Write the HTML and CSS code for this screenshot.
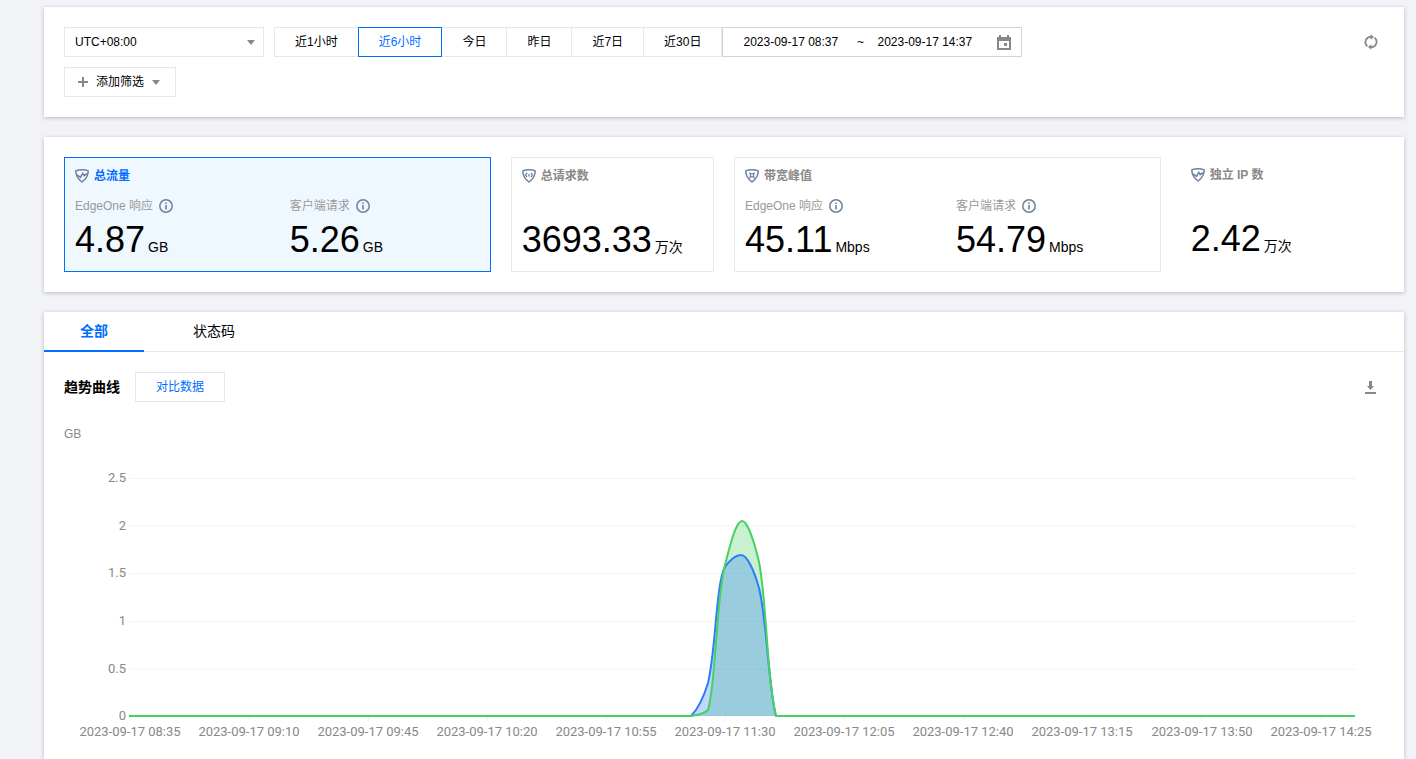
FILE: index.html
```html
<!DOCTYPE html>
<html lang="zh-CN">
<head>
  <meta charset="UTF-8">
  <meta name="viewport" content="width=device-width, initial-scale=1.0">
  <title>流量分析</title>
  <link rel="stylesheet" href="styles.css">
</head>
<body>
<svg class="sprite" aria-hidden="true">
  <symbol id="shield" viewBox="0 0 14 14">
    <path d="M7 .8C5 .8 2.6 1.1.8 1.9C.8 6.4 2.4 9.6 7 13C11.6 9.6 13.2 6.4 13.2 1.9C11.4 1.1 9 .8 7 .8Z" fill="none" stroke="currentColor" stroke-width="1.5"/>
  </symbol>
  <symbol id="pulse" viewBox="0 0 14 14">
    <path d="M2 5.8L5.4 8.4L7.8 4.4L9.2 6.6L12 4.6" fill="none" stroke="currentColor" stroke-width="1.5"/>
  </symbol>
  <symbol id="info" viewBox="0 0 14 14">
    <circle cx="7" cy="7" r="6.2" fill="none" stroke="currentColor" stroke-width="1.5"/>
    <path d="M6.2 3.4H7.8V5H6.2ZM6.2 6H7.8V10.6H6.2Z" fill="currentColor"/>
  </symbol>
</svg>

<main class="page">
  <section class="card filters">
    <div class="filter-row">
      <div class="select-box">
        <select class="select" aria-label="时区">
          <option>UTC+08:00</option>
        </select>
      </div>
      <div class="range">
        <div class="segment">
          <button type="button" class="btn">近1小时</button>
          <button type="button" class="btn active">近6小时</button>
          <button type="button" class="btn">今日</button>
          <button type="button" class="btn">昨日</button>
          <button type="button" class="btn">近7日</button>
          <button type="button" class="btn">近30日</button>
        </div>
        <div class="date-range">
          <input class="date-input" type="text" aria-label="开始时间" value="2023-09-17 08:37">
          <span class="tilde">~</span>
          <input class="date-input" type="text" aria-label="结束时间" value="2023-09-17 14:37">
          <svg class="calendar" width="14" height="16" viewBox="0 0 14 16">
            <path d="M2 1H4V3H10V1H12V3H14V16H0V3H2ZM2 7V14H12V7ZM7 9H10V12H7Z" fill="#888" fill-rule="evenodd"/>
          </svg>
        </div>
      </div>
      <button type="button" class="icon-btn refresh" aria-label="刷新">
        <svg width="14" height="16" viewBox="0 0 14 16">
          <path d="M3.4 12.2A5.2 5.2 0 0 1 7.4 3M10.6 3.8A5.2 5.2 0 0 1 6.6 13" fill="none" stroke="#888" stroke-width="1.8"/>
          <path d="M6.6 .2L10 3L6.6 5.8ZM7.4 10.2L4 13L7.4 15.8Z" fill="#888"/>
        </svg>
      </button>
    </div>
    <button type="button" class="btn add-filter">
      <svg width="10" height="10" viewBox="0 0 10 10"><path d="M5 0V10M0 5H10" stroke="#888" stroke-width="2"/></svg>
      添加筛选
      <span class="caret"></span>
    </button>
  </section>

  <section class="card stats">
    <div class="stat wide selected">
      <h3 class="stat-title"><svg class="icon"><use href="#shield"/><use href="#pulse"/></svg>总流量</h3>
      <div class="metrics">
        <div class="metric">
          <div class="metric-label">EdgeOne 响应<svg class="icon"><use href="#info"/></svg></div>
          <div class="metric-value">4.87<span class="unit">GB</span></div>
        </div>
        <div class="metric">
          <div class="metric-label">客户端请求<svg class="icon"><use href="#info"/></svg></div>
          <div class="metric-value">5.26<span class="unit">GB</span></div>
        </div>
      </div>
    </div>
    <div class="stat">
      <h3 class="stat-title">
        <svg class="icon"><use href="#shield"/><path d="M5 3.8L3.6 6L5 8.2M9 3.8L10.4 6L9 8.2M7 5V7.5" fill="none" stroke="currentColor" stroke-width="1.3"/></svg>总请求数
      </h3>
      <div class="metric-value">3693.33<span class="unit">万次</span></div>
    </div>
    <div class="stat wide">
      <h3 class="stat-title">
        <svg class="icon"><use href="#shield"/><path d="M4.2 3.6L5.6 5M9.8 3.6L8.4 5M4.2 9.2L5.6 7.8M9.8 9.2L8.4 7.8M5.4 4.9H8.6V7.9H5.4Z" fill="none" stroke="currentColor" stroke-width="1.3"/></svg>带宽峰值
      </h3>
      <div class="metrics">
        <div class="metric">
          <div class="metric-label">EdgeOne 响应<svg class="icon"><use href="#info"/></svg></div>
          <div class="metric-value">45.11<span class="unit">Mbps</span></div>
        </div>
        <div class="metric">
          <div class="metric-label">客户端请求<svg class="icon"><use href="#info"/></svg></div>
          <div class="metric-value">54.79<span class="unit">Mbps</span></div>
        </div>
      </div>
    </div>
    <div class="stat plain">
      <h3 class="stat-title"><svg class="icon"><use href="#shield"/><use href="#pulse"/></svg>独立 IP 数</h3>
      <div class="metric-value">2.42<span class="unit">万次</span></div>
    </div>
  </section>

  <section class="card trend">
    <div class="tabs" role="tablist">
      <button type="button" class="tab current" role="tab" aria-selected="true">全部</button>
      <button type="button" class="tab" role="tab" aria-selected="false">状态码</button>
    </div>
    <div class="trend-body">
      <div class="trend-head">
        <h3 class="trend-title">趋势曲线</h3>
        <button type="button" class="btn compare">对比数据</button>
        <button type="button" class="icon-btn" aria-label="下载">
          <svg width="12" height="14" viewBox="0 0 12 14">
            <path d="M4 1H7V6H9L5.5 10L2 6H4ZM0 12H11V14H0Z" fill="#888"/>
          </svg>
        </button>
      </div>
      <div class="chart-unit">GB</div>
      <svg class="chart" viewBox="0 0 1320 315" role="img" aria-label="流量趋势">
        <path class="grid" d="M66 34.5H1292M66 82H1292M66 129.500H1292M66 177.500H1292M66 225H1292M66.500 272V277M185.500 272V277M304.500 272V277M423.500 272V277M542.500 272V277M661.500 272V277M780.500 272V277M899.500 272V277M1018.500 272V277M1137.500 272V277M1257 272V277"/>
        <g class="axis-y">
          <text x="62" y="38">2.5</text>
          <text x="62" y="86">2</text>
          <text x="62" y="133">1.5</text>
          <text x="62" y="181">1</text>
          <text x="62" y="229">0.5</text>
          <text x="62" y="276">0</text>
        </g>
        <!-- client request area sits behind the EdgeOne response -->
        <path class="area-green" d="M627 272C634 271 640 270 644 266C652 240 652 155 661 121C666 101 672 77 678 77C684 77 691 101 695 118C703 158 703 240 712 272Z"/>
        <path class="area-blue" d="M627 272C634 265 640 252 644 239C652 206 652 138 661 123C666 116 672 111 677 111C683 111 690 126 695 144C703 176 704 240 712 272Z"/>
        <path class="line-blue" d="M66 272H627C634 265 640 252 644 239C652 206 652 138 661 123C666 116 672 111 677 111C683 111 690 126 695 144C703 176 704 240 712 272H1291"/>
        <path class="line-green" d="M65 272H627C634 271 640 270 644 266C652 240 652 155 661 121C666 101 672 77 678 77C684 77 691 101 695 118C703 158 703 240 712 272H1291"/>
        <g class="axis-x">
          <text x="66" y="292">2023-09-17 08:35</text>
          <text x="185" y="292">2023-09-17 09:10</text>
          <text x="304" y="292">2023-09-17 09:45</text>
          <text x="423" y="292">2023-09-17 10:20</text>
          <text x="542" y="292">2023-09-17 10:55</text>
          <text x="661" y="292">2023-09-17 11:30</text>
          <text x="780" y="292">2023-09-17 12:05</text>
          <text x="899" y="292">2023-09-17 12:40</text>
          <text x="1018" y="292">2023-09-17 13:15</text>
          <text x="1138" y="292">2023-09-17 13:50</text>
          <text x="1257" y="292">2023-09-17 14:25</text>
        </g>
      </svg>
    </div>
  </section>
</main>
</body>
</html>
```
FILE: styles.css
```css
* {
  box-sizing: border-box;
}
body {
  margin: 0;
  background: #f2f3f7;
  color: #000;
  font-family: "Liberation Sans", "Noto Sans CJK SC", sans-serif;
  font-size: 12px;
  line-height: 20px;
}
h3 {
  margin: 0;
}
button,
input,
select {
  font: inherit;
  color: inherit;
}
button {
  cursor: pointer;
}
svg {
  display: block;
  flex: none;
}
.sprite {
  display: none;
}
.page {
  display: flex;
  flex-direction: column;
  gap: 20px;
  min-height: 100vh;
  padding: 7px 12px 0 44px;
}
.card {
  background: #fff;
  box-shadow: 0 1px 4px rgba(54, 58, 80, 0.3);
}

/* filters */
.filters {
  padding: 20px;
}
.filter-row {
  display: flex;
  gap: 10px;
  margin-bottom: 10px;
}
.select-box {
  position: relative;
  width: 200px;
}
.select-box::after {
  content: "";
  position: absolute;
  right: 9px;
  top: 13px;
  border: 4px solid transparent;
  border-top: 5px solid #888;
  border-bottom: 0;
  pointer-events: none;
}
.select {
  width: 100%;
  height: 30px;
  padding: 0 10px;
  border: 1px solid #e5e8ed;
  border-radius: 0;
  background: #fff;
  appearance: none;
}
.range,
.segment {
  display: flex;
}
.btn {
  height: 30px;
  padding: 0 20px;
  border: 1px solid #e5e8ed;
  background: #fff;
  white-space: nowrap;
}
.segment .btn + .btn {
  margin-left: -1px;
}
.segment .active {
  position: relative;
  border-color: #006eff;
  color: #006eff;
}
.date-range {
  display: flex;
  align-items: center;
  width: 300px;
  height: 30px;
  padding: 0 10px 0 20px;
  border: 1px solid #cfd5de;
}
.date-input {
  width: 100px;
  padding: 0;
  border: 0;
  background: none;
}
.tilde {
  width: 34px;
  text-align: center;
}
.calendar {
  margin-left: auto;
}
.icon-btn {
  display: flex;
  align-items: center;
  justify-content: center;
  width: 26px;
  height: 30px;
  margin-left: auto;
  padding: 0;
  border: 0;
  background: none;
}
.add-filter {
  display: flex;
  align-items: center;
  gap: 8px;
  padding: 0 15px 0 13px;
}
.caret {
  border: 4px solid transparent;
  border-top: 5px solid #888;
  border-bottom: 0;
}

/* stats */
.stats {
  display: grid;
  grid-template-columns: repeat(6, 1fr);
  gap: 20px;
  padding: 20px;
}
.stat {
  display: flex;
  flex-direction: column;
  justify-content: space-between;
  min-height: 115px;
  padding: 10px;
  border: 1px solid #e5e8ed;
}
.wide {
  grid-column: span 2;
}
.plain {
  min-height: 0;
  margin-bottom: 2px;
  border: 0;
}
.selected {
  border-color: #006eff;
  background: #f0f8ff;
}
.stat-title {
  display: flex;
  align-items: center;
  gap: 5px;
  color: #888;
  font-size: 12px;
  line-height: 16px;
}
.selected .stat-title {
  color: #006eff;
}
.icon {
  width: 14px;
  height: 14px;
  color: #6e829d;
}
.metrics {
  display: flex;
  gap: 20px;
}
.metric {
  flex: 1 1 auto;
}
.metric-label {
  display: flex;
  align-items: center;
  gap: 6px;
  margin-bottom: 3px;
  color: #999;
}
.metric-value {
  font-size: 36px;
  line-height: 42px;
  white-space: nowrap;
}
.unit {
  margin-left: 3px;
  font-size: 14px;
  line-height: 20px;
}

/* trend */
.trend {
  flex: 1;
}
.tabs {
  display: flex;
  gap: 13px;
  border-bottom: 1px solid #e5e8ed;
}
.tab {
  height: 40px;
  margin-bottom: -1px;
  padding: 0 36px;
  border: 0;
  border-bottom: 2px solid transparent;
  background: none;
  font-size: 14px;
}
.tab.current {
  border-color: #006eff;
  color: #006eff;
  font-weight: bold;
}
.trend-body {
  padding: 20px 20px 0;
}
.trend-head {
  display: flex;
  align-items: center;
}
.trend-title {
  margin-right: 15px;
  font-size: 14px;
}
.compare {
  color: #006eff;
}
.chart-unit {
  margin-top: 22px;
  color: #888;
}
.chart {
  width: 100%;
  height: auto;
}
.chart text {
  fill: #888;
  font-family: Roboto, sans-serif;
  font-size: 13px;
}
.axis-x {
  text-anchor: middle;
}
.axis-y {
  text-anchor: end;
}
.grid {
  fill: none;
  stroke: #f3f3f3;
}
.line-blue,
.line-green {
  fill: none;
  stroke: #2f7bff;
  stroke-width: 2;
  stroke-linejoin: round;
}
.line-green {
  stroke: #46d160;
}
.area-blue {
  fill: rgba(47, 123, 255, 0.3);
}
.area-green {
  fill: rgba(70, 209, 96, 0.3);
}
```
